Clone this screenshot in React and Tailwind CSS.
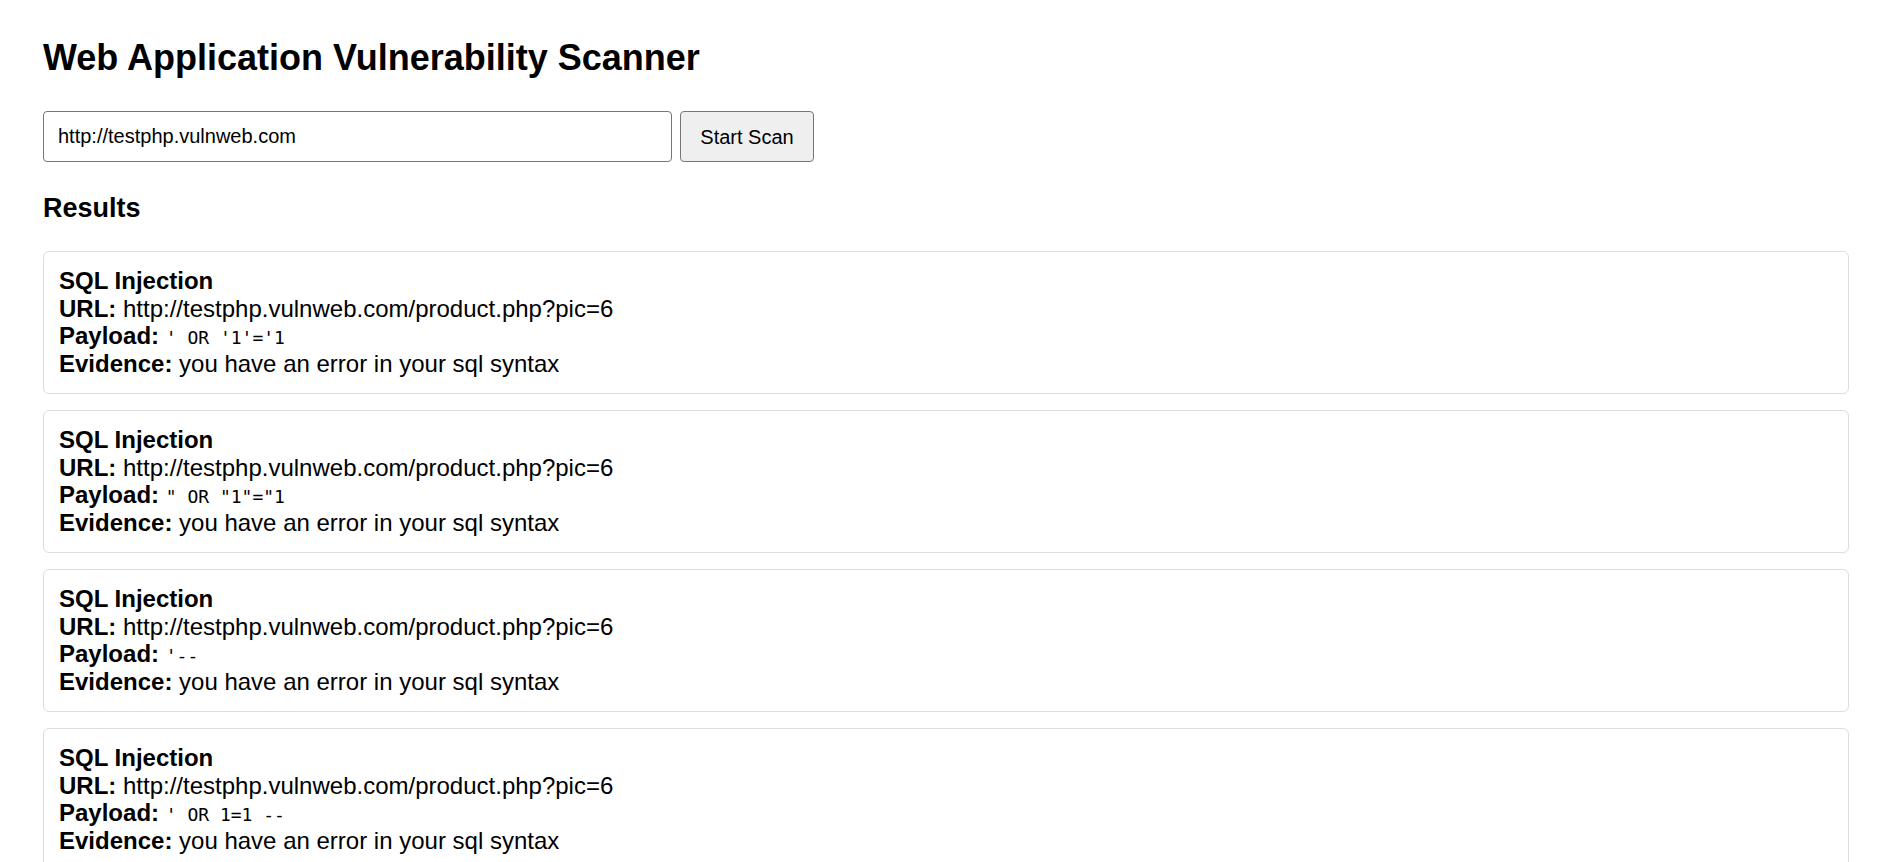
import React from "react";

const results = [
  { payload: "' OR '1'='1" },
  { payload: '" OR "1"="1' },
  { payload: "'--" },
  { payload: "' OR 1=1 --" },
  { payload: "\" OR 1=1 --" },
];

export default function App() {
  return (
    <div className="min-h-screen bg-white pl-[43px] pr-[39px] pt-[37px] pb-10 text-black font-['Liberation_Sans',Arial,sans-serif]">
      <h1 className="text-[36px] leading-[41px] font-bold m-0">
        Web Application Vulnerability Scanner
      </h1>
      <div className="mt-[33px] flex items-center gap-[8px]">
        <input
          type="text"
          defaultValue="http://testphp.vulnweb.com"
          className="w-[629px] h-[51px] border border-[#767676] rounded-[4px] px-[14px] text-[20px] text-black outline-none bg-white"
        />
        <button className="w-[134px] h-[51px] border border-[#767676] rounded-[4px] bg-[#efefef] text-[20px] text-black">
          Start Scan
        </button>
      </div>
      <h2 className="mt-[31px] text-[27px] leading-[31px] font-bold">Results</h2>
      <div className="mt-[27px] flex flex-col gap-[16px]">
        {results.map((r, i) => (
          <div
            key={i}
            className="border border-[#dddddd] rounded-[6px] px-[15px] pt-[15px] pb-[16px] text-[24px] leading-[27.5px]"
          >
            <div className="font-bold">SQL Injection</div>
            <div>
              <span className="font-bold">URL:</span> http://testphp.vulnweb.com/product.php?pic=6
            </div>
            <div className="h-[27.5px]">
              <span className="font-bold">Payload:</span>{" "}
              <code className="font-['DejaVu_Sans_Mono',monospace] text-[18px] leading-none whitespace-pre">
                {r.payload}
              </code>
            </div>
            <div>
              <span className="font-bold">Evidence:</span> you have an error in your sql syntax
            </div>
          </div>
        ))}
      </div>
    </div>
  );
}
